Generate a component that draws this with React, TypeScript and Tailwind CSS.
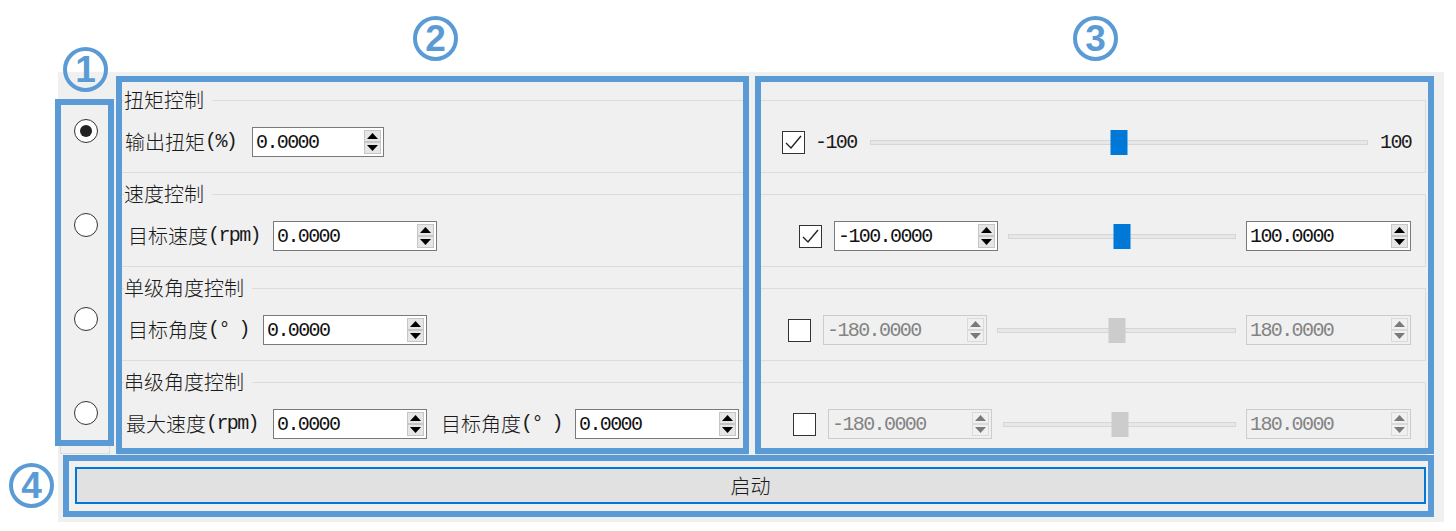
import React from "react";

function Arrow({ up, disabled }: { up?: boolean; disabled?: boolean }) {
  return (
    <svg width="11" height="6" viewBox="0 0 11 6">
      <polygon points={up ? "0,6 5.5,0 11,6" : "0,0 11,0 5.5,6"} fill={disabled ? "#7a7a7a" : "#000"} />
    </svg>
  );
}

function Spin({ value, w, disabled }: { value: string; w: string; disabled?: boolean }) {
  return (
    <div
      className={`${w} h-[30px] flex shrink-0 border ${
        disabled ? "border-[#cccccc] bg-[#f0f0f0] text-[#838383]" : "border-[#7a7a7a] bg-white text-[#111111]"
      }`}
    >
      <div className="flex-1 flex items-center pl-[3px] pt-[2px] font-['Liberation_Mono',monospace] text-[20px] tracking-[-1.6px] leading-none">
        {value}
      </div>
      <div className="w-[17px] my-[2px] mr-[2px] flex flex-col">
        <div
          className={`h-[12px] flex items-center justify-center border ${
            disabled ? "border-[#dadada] bg-[#f0f0f0]" : "border-[#c6c6c6] bg-[#e6e6e6]"
          }`}
        >
          <Arrow up disabled={disabled} />
        </div>
        <div
          className={`h-[12px] flex items-center justify-center border ${
            disabled ? "border-[#dadada] bg-[#f0f0f0]" : "border-[#c6c6c6] bg-[#e6e6e6]"
          }`}
        >
          <Arrow disabled={disabled} />
        </div>
      </div>
    </div>
  );
}

function Radio({ checked }: { checked?: boolean }) {
  return (
    <div className="w-[24px] h-[24px] rounded-full border-[1.5px] border-[#333333] bg-white flex items-center justify-center">
      {checked && <div className="w-[12px] h-[12px] rounded-full bg-[#222222]" />}
    </div>
  );
}

function Check({ checked }: { checked?: boolean }) {
  return (
    <div className="w-[23px] h-[23px] shrink-0 border border-[#333333] bg-white flex items-center justify-center">
      {checked && (
        <svg width="21" height="21" viewBox="0 0 21 21">
          <polyline points="3,11 8,16 18,4" fill="none" stroke="#222222" strokeWidth="1.4" />
        </svg>
      )}
    </div>
  );
}

function Slider({ w, disabled }: { w: string; disabled?: boolean }) {
  return (
    <div className={`${w} relative h-[25px] shrink-0 flex items-center`}>
      <div className="w-full h-[5px] bg-[#e7e7e7] border border-[#d6d6d6]" />
      <div
        className={`absolute top-0 left-1/2 -translate-x-1/2 w-[17px] h-[25px] ${
          disabled ? "bg-[#cccccc]" : "bg-[#0078d7]"
        }`}
      />
    </div>
  );
}

function Label({ cjk, ascii, deg, w }: { cjk: string; ascii?: string; deg?: boolean; w: string }) {
  return (
    <div className={`${w} shrink-0 flex items-center leading-none`}>
      <span className="text-[20px] font-light">{cjk}</span>
      <span className="font-['Liberation_Mono',monospace] text-[20px] tracking-[-1.6px]">
        {deg ? (
          <>
            (<span className="inline-block w-[20px]">°</span>)
          </>
        ) : (
          ascii
        )}
      </span>
    </div>
  );
}

function Group({ title, children }: { title?: string; children: React.ReactNode }) {
  return (
    <div className="relative h-[73px] border border-[#dcdcdc] pt-[26px]">
      {title && (
        <div className="absolute left-[5px] top-[-11px] h-[20px] pr-[8px] bg-[#f0f0f0] text-[20px] font-light leading-[20px]">
          {title}
        </div>
      )}
      {children}
    </div>
  );
}

function Circled({ n, cls }: { n: string; cls: string }) {
  return (
    <div
      className={`absolute ${cls} w-[45px] h-[45px] rounded-full border-[4px] border-[#5b9bd5] flex items-center justify-center text-[#5b9bd5] font-['Liberation_Sans',sans-serif] font-bold text-[37px] leading-none`}
    >
      {n}
    </div>
  );
}

export default function App() {
  return (
    <div className="relative w-[1456px] h-[531px] bg-white overflow-hidden pl-[58px] pt-[72px] text-[#1a1a1a] font-['Noto_Sans_CJK_SC',sans-serif]">
      <div className="w-[1386px] h-[450px] bg-[#f0f0f0] flex flex-col">
        <div className="flex h-[383px]">
          {/* radio column */}
          <div className="w-[58px] shrink-0">
            <div className="ml-[2px] mt-[29px] w-[50px] h-[353px] border border-[#dcdcdc] flex flex-col items-start pl-[13px] pt-[17px] gap-[70px]">
              <Radio checked />
              <Radio />
              <Radio />
              <Radio />
            </div>
          </div>

          {/* middle column */}
          <div className="w-[636px] shrink-0 pt-[28px] flex flex-col gap-[21px]">
            <div className="ml-[2px] w-[630px] flex flex-col gap-[21px]">
              <Group title="扭矩控制">
                <div className="flex items-center h-[30px] pl-[6px]">
                  <Label cjk="输出扭矩" ascii="(%)" w="w-[127px]" />
                  <Spin value="0.0000" w="w-[132px]" />
                </div>
              </Group>
              <Group title="速度控制">
                <div className="flex items-center h-[30px] pl-[9px]">
                  <Label cjk="目标速度" ascii="(rpm)" w="w-[145px]" />
                  <Spin value="0.0000" w="w-[164px]" />
                </div>
              </Group>
              <Group title="单级角度控制">
                <div className="flex items-center h-[30px] pl-[9px]">
                  <Label cjk="目标角度" deg w="w-[135px]" />
                  <Spin value="0.0000" w="w-[164px]" />
                </div>
              </Group>
              <Group title="串级角度控制">
                <div className="flex items-center h-[30px] pl-[7px]">
                  <Label cjk="最大速度" ascii="(rpm)" w="w-[147px]" />
                  <Spin value="0.0000" w="w-[154px]" />
                  <div className="ml-[14px]">
                    <Label cjk="目标角度" deg w="w-[134px]" />
                  </div>
                  <Spin value="0.0000" w="w-[164px]" />
                </div>
              </Group>
            </div>
          </div>

          {/* right column */}
          <div className="flex-1 pt-[28px]">
            <div className="ml-[4px] w-[670px] flex flex-col gap-[21px]">
              <Group>
                <div className="flex items-center h-[30px]">
                  <div className="ml-[25px]">
                    <Check checked />
                  </div>
                  <div className="ml-[10px] w-[55px] pt-[2px] font-['Liberation_Mono',monospace] text-[20px] tracking-[-1.6px] leading-none">
                    -100
                  </div>
                  <Slider w="w-[498px]" />
                  <div className="ml-[12px] pt-[2px] font-['Liberation_Mono',monospace] text-[20px] tracking-[-1.6px] leading-none">
                    100
                  </div>
                </div>
              </Group>
              <Group>
                <div className="flex items-center h-[30px]">
                  <div className="ml-[42px]">
                    <Check checked />
                  </div>
                  <div className="ml-[12px]">
                    <Spin value="-100.0000" w="w-[164px]" />
                  </div>
                  <div className="ml-[10px]">
                    <Slider w="w-[228px]" />
                  </div>
                  <div className="ml-[10px]">
                    <Spin value="100.0000" w="w-[165px]" />
                  </div>
                </div>
              </Group>
              <Group>
                <div className="flex items-center h-[30px]">
                  <div className="ml-[31px]">
                    <Check />
                  </div>
                  <div className="ml-[12px]">
                    <Spin value="-180.0000" w="w-[164px]" disabled />
                  </div>
                  <div className="ml-[10px]">
                    <Slider w="w-[239px]" disabled />
                  </div>
                  <div className="ml-[10px]">
                    <Spin value="180.0000" w="w-[165px]" disabled />
                  </div>
                </div>
              </Group>
              <Group>
                <div className="flex items-center h-[30px]">
                  <div className="ml-[36px]">
                    <Check />
                  </div>
                  <div className="ml-[12px]">
                    <Spin value="-180.0000" w="w-[164px]" disabled />
                  </div>
                  <div className="ml-[11px]">
                    <Slider w="w-[233px]" disabled />
                  </div>
                  <div className="ml-[10px]">
                    <Spin value="180.0000" w="w-[165px]" disabled />
                  </div>
                </div>
              </Group>
            </div>
          </div>
        </div>

        {/* button row */}
        <div className="ml-[17px] mt-[12px] w-[1351px] h-[37px] border-2 border-[#0078d7] bg-[#e1e1e1] flex items-center justify-center text-[20px] font-light leading-none">
          启动
        </div>
      </div>

      {/* annotation overlays */}
      <div className="absolute left-[55px] top-[99px] w-[59px] h-[347px] border-[6px] border-[#5b9bd5]" />
      <div className="absolute left-[116px] top-[76px] w-[633px] h-[378px] border-[6px] border-[#5b9bd5]" />
      <div className="absolute left-[755px] top-[76px] w-[679px] h-[378px] border-[6px] border-[#5b9bd5]" />
      <div className="absolute left-[63px] top-[455px] w-[1371px] h-[62px] border-[6px] border-[#5b9bd5]" />

      <Circled n="1" cls="left-[63px] top-[47px]" />
      <Circled n="2" cls="left-[413px] top-[16px]" />
      <Circled n="3" cls="left-[1073px] top-[16px]" />
      <Circled n="4" cls="left-[9px] top-[463px]" />
    </div>
  );
}
